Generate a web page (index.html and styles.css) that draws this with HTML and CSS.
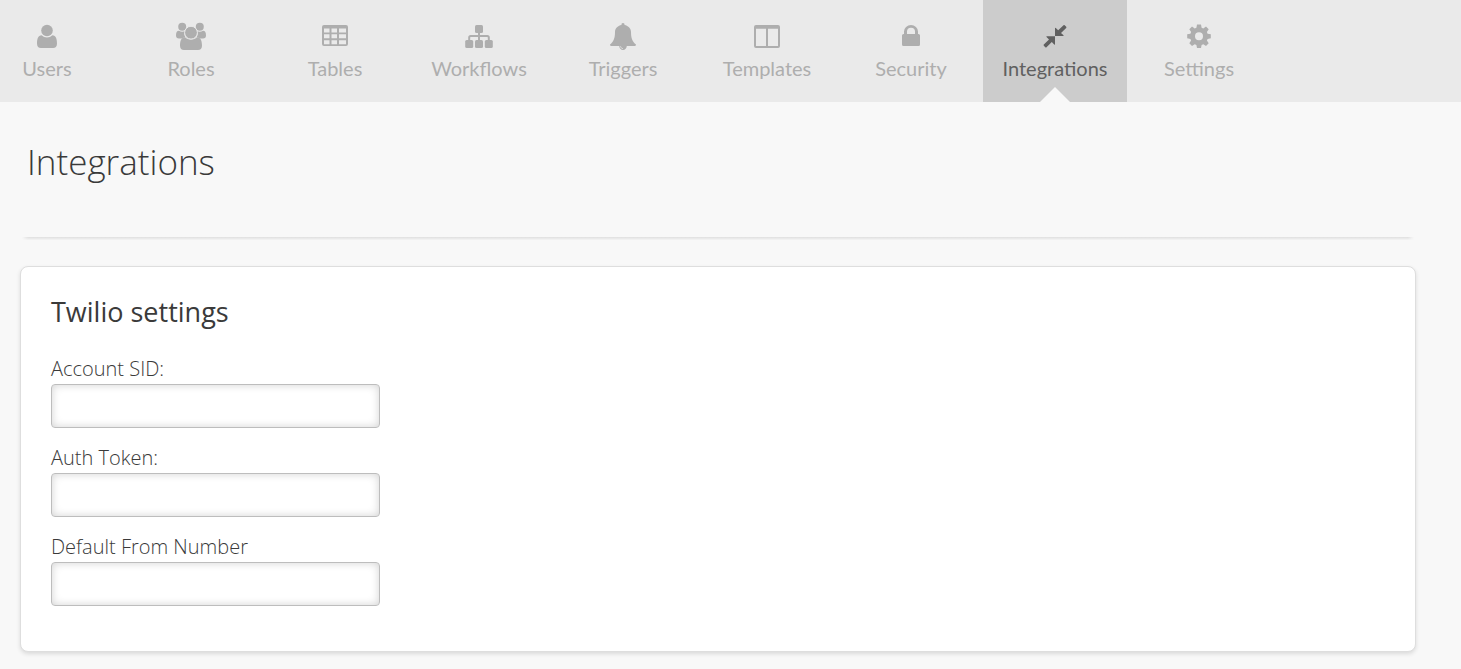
FILE: index.html
```html
<!DOCTYPE html>
<html lang="en">
<head>
<meta charset="utf-8">
<title>Integrations</title>
<link rel="stylesheet" href="styles.css">
</head>
<body>
<nav class="topnav" aria-label="Main">
  <a class="tab" href="#users">
    <svg class="icon" viewBox="0 0 32 32" aria-hidden="true"><circle cx="16" cy="10.5" r="5.8"/><path d="M10.6 15.2a7.6 7.6 0 0 0 10.8 0C25 15.400 26 19 26 23.500 26 26.500 24.500 28 22 28H10c-2.500 0-4-1.500-4-4.500 0-4.500 1-8.100 4.600-8.300z"/></svg>
    <span>Users</span>
  </a>
  <a class="tab" href="#roles">
    <svg class="icon" viewBox="0 0 32 32" aria-hidden="true"><circle cx="7.200" cy="6.700" r="4"/><circle cx="24.800" cy="6.700" r="4"/><path d="M4 10.700c2 1.300 4.500 1.300 6 .2-1 2.600-.7 4.600.6 6.500-1.600.1-2.700.3-3.600 1H4c-2 0-3-1-3-2.900 0-3 .8-4.700 3-4.800zM28 10.700c-2 1.300-4.500 1.300-6 .2 1 2.600.7 4.600-.6 6.500 1.600.1 2.700.3 3.600 1h3c2 0 3-1 3-2.900 0-3-.8-4.700-3-4.800z"/><circle class="ring" cx="16" cy="12.700" r="6.400"/><path d="M9.800 17.300c3.500 3.300 8.900 3.300 12.400 0C25.800 17.700 27 21 27 25.700c0 2.800-1.500 4.300-4 4.300H9c-2.500 0-4-1.500-4-4.300 0-4.700 1.200-8 4.800-8.400z"/></svg>
    <span>Roles</span>
  </a>
  <a class="tab" href="#tables">
    <svg class="icon" viewBox="0 0 32 32" aria-hidden="true"><path fill-rule="evenodd" d="M5 5h22a2 2 0 0 1 2 2v17a2 2 0 0 1-2 2H5a2 2 0 0 1-2-2V7a2 2 0 0 1 2-2zM5 8.500v4h5.500v-4zM12.500 8.500v4h5.500v-4zM20 8.500v4h7v-4zM5 14.300v4h5.500v-4zM12.500 14.300v4h5.500v-4zM20 14.300v4h7v-4zM5 20.200v4h5.500v-4zM12.500 20.200v4h5.500v-4zM20 20.200v4h7v-4z"/></svg>
    <span>Tables</span>
  </a>
  <a class="tab" href="#workflows">
    <svg class="icon" viewBox="0 0 32 32" aria-hidden="true"><rect x="12" y="5" width="8" height="8" rx="1.500"/><rect x="2.200" y="20" width="8" height="8" rx="1.500"/><rect x="12" y="20" width="8" height="8" rx="1.500"/><rect x="21.800" y="20" width="8" height="8" rx="1.500"/><path class="line" d="M16 12v9M6.200 21v-3.500q0-1.500 1.500-1.500h16.600q1.500 0 1.500 1.500V21"/></svg>
    <span>Workflows</span>
  </a>
  <a class="tab" href="#triggers">
    <svg class="icon" viewBox="0 0 32 32" aria-hidden="true"><path d="M16 3c1 0 1.700.7 1.500 1.900C21.500 5.600 24 8.500 24 12c0 6 1.500 10 5 12.500 0 1-.8 1.500-1.800 1.500h-7.400c0 2.300-1.700 4-3.800 4s-3.800-1.700-3.800-4H4.800C3.800 26 3 25.500 3 24.500 6.500 22 8 18 8 12c0-3.500 2.500-6.400 6.500-7.100C14.300 3.700 15 3 16 3z"/><path class="cut" d="M13.500 26.200c.1 1.400 1.100 2.400 2.500 2.400"/></svg>
    <span>Triggers</span>
  </a>
  <a class="tab" href="#templates">
    <svg class="icon" viewBox="0 0 32 32" aria-hidden="true"><path fill-rule="evenodd" d="M5 5h22a2 2 0 0 1 2 2v19a2 2 0 0 1-2 2H5a2 2 0 0 1-2-2V7a2 2 0 0 1 2-2zM5 8.700V26h10V8.700zM17 8.700V26h10V8.700z"/></svg>
    <span>Templates</span>
  </a>
  <a class="tab" href="#security">
    <svg class="icon" viewBox="0 0 32 32" aria-hidden="true"><path fill-rule="evenodd" d="M9 14v-2.500a7 6.500 0 0 1 14 0V14h.5q1.500 0 1.500 1.500v9q0 1.500-1.500 1.500h-15Q7 26 7 24.500v-9Q7 14 8.500 14zM12 14h8v-2.500a4 3.800 0 0 0-8 0z"/></svg>
    <span>Security</span>
  </a>
  <a class="tab active" href="#integrations" aria-current="page">
    <svg class="icon" viewBox="0 0 32 32" aria-hidden="true"><path d="M16 16V8.300q0-1 .8-.4l2.400 2.300L24.500 5.200q.6-.5 1.200 0l1.500 1.500q.5.600 0 1.200L22 13l2.500 2.300q.6.700-.4.700zM16 16.300V24q0 1-.8.400l-2.400-2.300L7.500 27.300q-.6.500-1.200 0L4.800 25.800q-.5-.6 0-1.200L10 19.400 7.500 17q-.6-.7.4-.7z"/></svg>
    <span>Integrations</span>
  </a>
  <a class="tab" href="#settings">
    <svg class="icon" viewBox="0 0 32 32" aria-hidden="true"><path fill-rule="evenodd" d="M14 4.500h4l.6 3.200 1.700.7 2.700-1.800 2.700 2.700-1.800 2.700.7 1.700 3.200.6v4l-3.200.6-.7 1.700 1.800 2.700-2.700 2.700-2.700-1.800-1.700.7-.6 3.200h-4l-.6-3.200-1.700-.7L9 26l-2.700-2.700 1.800-2.700-.7-1.700-3.200-.6v-4l3.200-.6.7-1.700-1.800-2.700L9 6.600l2.700 1.800 1.700-.7zM16 12.300a4 4 0 1 0 0 8 4 4 0 0 0 0-8z"/></svg>
    <span>Settings</span>
  </a>
</nav>
<main class="page">
  <h1 class="title">Integrations</h1>
  <hr class="rule">
  <form class="card">
    <h2 class="card-title">Twilio settings</h2>
    <div class="field">
      <label for="sid">Account SID:</label>
      <input id="sid" type="text">
    </div>
    <div class="field">
      <label for="token">Auth Token:</label>
      <input id="token" type="text">
    </div>
    <div class="field">
      <label for="from">Default From Number</label>
      <input id="from" type="text">
    </div>
  </form>
</main>
</body>
</html>
```
FILE: styles.css
```css
* {
  box-sizing: border-box;
}

body {
  margin: 0;
  background: #f8f8f8;
  color: #3a3a3a;
  font-family: "Open Sans", "Noto Sans", sans-serif;
  overflow-x: hidden;
}

.topnav {
  display: flex;
  margin-left: -25px;
  background: #eaeaea;
}

.tab {
  position: relative;
  display: flex;
  flex-direction: column;
  align-items: center;
  width: 144px;
  padding: 20px 0 18px;
  color: #aeaeae;
  font-family: Lato, "Open Sans", sans-serif;
  font-size: 20px;
  line-height: 32px;
  text-decoration: none;
}

.icon {
  display: block;
  width: 32px;
  height: 32px;
  fill: currentColor;
}

.icon .line {
  fill: none;
  stroke: currentColor;
  stroke-width: 2;
}

.icon .cut {
  fill: none;
  stroke: #eaeaea;
  stroke-width: 0.7;
}

.icon .ring {
  stroke: #eaeaea;
  stroke-width: 1;
}

.tab.active {
  background: #cccccc;
  color: #606060;
}

.tab.active::after {
  content: "";
  position: absolute;
  bottom: 0;
  left: 50%;
  margin-left: -15px;
  border: 15px solid transparent;
  border-top: 0;
  border-bottom-color: #f8f8f8;
}

.page {
  padding: 35px 45px 16px 20px;
}

.title {
  margin: 0 7px;
  font-size: 35px;
  font-weight: 300;
  line-height: 50px;
}

.rule {
  height: 3px;
  margin: 50px 2px 26px;
  border: 0;
  background:
    linear-gradient(90deg, #f8f8f8, transparent 6px calc(100% - 6px), #f8f8f8),
    linear-gradient(#dfdfdf, #f5f5f5);
}

.card {
  padding: 25px 30px 45px;
  border: 1px solid #dedede;
  border-radius: 8px;
  background: #ffffff;
  box-shadow: 0 2px 4px rgba(0, 0, 0, 0.12);
}

.card-title {
  margin: 0 0 21px;
  font-size: 27px;
  font-weight: 400;
  line-height: 40px;
}

.field {
  display: flex;
  flex-direction: column;
  align-items: flex-start;
}

.field + .field {
  margin-top: 14px;
}

.field label {
  font-size: 20px;
  font-weight: 350;
  line-height: 31px;
}

.field input {
  width: 329px;
  max-width: 100%;
  height: 44px;
  padding: 0 12px;
  border: 1px solid #bdbdbd;
  border-radius: 4px;
  background: #ffffff;
  box-shadow: inset 0 0 8px rgba(0, 0, 0, 0.18);
  font: inherit;
  font-size: 20px;
}
```
